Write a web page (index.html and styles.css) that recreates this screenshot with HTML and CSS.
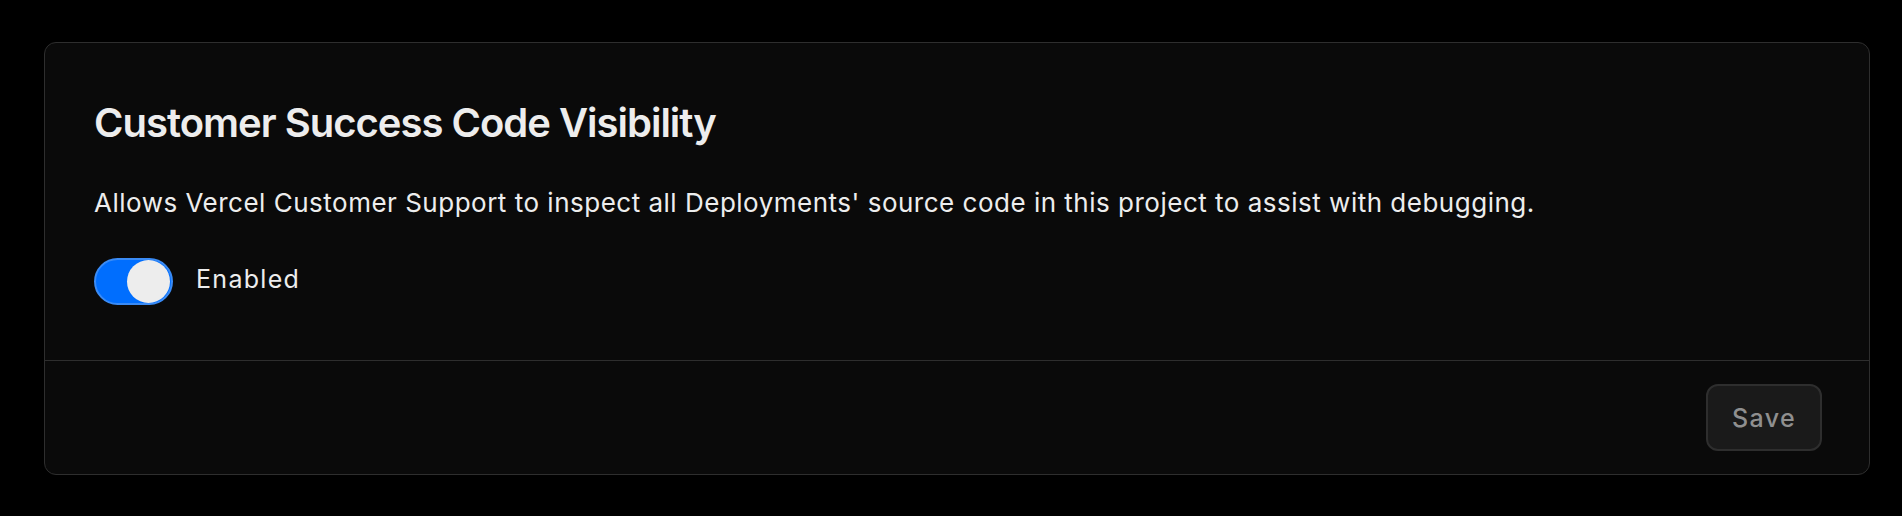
FILE: index.html
```html
<!DOCTYPE html>
<html lang="en">
<head>
<meta charset="utf-8">
<title>Customer Success Code Visibility</title>
<link rel="stylesheet" href="styles.css">
</head>
<body>
  <section class="card">
    <div class="card-body">
      <h2 class="title">Customer Success Code Visibility</h2>
      <p class="desc">Allows Vercel Customer Support to inspect all Deployments' source code in this project to assist with debugging.</p>
      <label class="toggle-row">
        <span class="toggle" role="switch" aria-checked="true"><span class="knob"></span></span>
        <span class="toggle-label">Enabled</span>
      </label>
    </div>
    <div class="card-footer">
      <button class="btn-save" type="button" disabled>Save</button>
    </div>
  </section>
</body>
</html>
```
FILE: styles.css
```css
* { box-sizing: border-box; }
html, body { background: #000; }
body {
  margin: 0;
  padding: 42px 32px 41px 44px;
  font-family: Inter, "Noto Sans", "Liberation Sans", sans-serif;
  color: #ededed;
}
.card {
  background: #0a0a0a;
  border: 1px solid #2e2e2e;
  border-radius: 12px;
  overflow: hidden;
}
.card-body {
  padding: 48px 49px 55px 49px;
}
.title {
  margin: 4px 0 0 0;
  font-size: 40px;
  line-height: 56px;
  font-weight: 600;
  letter-spacing: -1px;
  color: #ededed;
}
.desc {
  margin: 32px 0 0 0;
  font-size: 26px;
  line-height: 40px;
  font-weight: 400;
  letter-spacing: 0.5px;
  color: #ededed;
}
.toggle-row {
  margin-top: 35px;
  display: flex;
  align-items: center;
  gap: 23px;
}
.toggle {
  width: 79px;
  height: 47px;
  border-radius: 24px;
  background: #006efe;
  border: 2px solid #3a8bf5;
  display: flex;
  align-items: center;
  justify-content: flex-end;
  padding: 0 1px;
}
.knob {
  width: 43px;
  height: 43px;
  border-radius: 50%;
  background: #ededed;
}
.toggle-label {
  font-size: 25px;
  line-height: 30px;
  letter-spacing: 1.3px;
  padding-bottom: 6px;
  color: #ededed;
}
.card-footer {
  border-top: 1px solid #2e2e2e;
  padding: 23px 47px 23px 48px;
  display: flex;
  justify-content: flex-end;
}
.btn-save {
  width: 116px;
  height: 67px;
  border-radius: 12px;
  border: 2px solid #2e2e2e;
  background: #1a1a1a;
  color: #8f8f8f;
  font-family: inherit;
  font-size: 25px;
  font-weight: 500;
  letter-spacing: 1.4px;
  padding: 0;
}
```
